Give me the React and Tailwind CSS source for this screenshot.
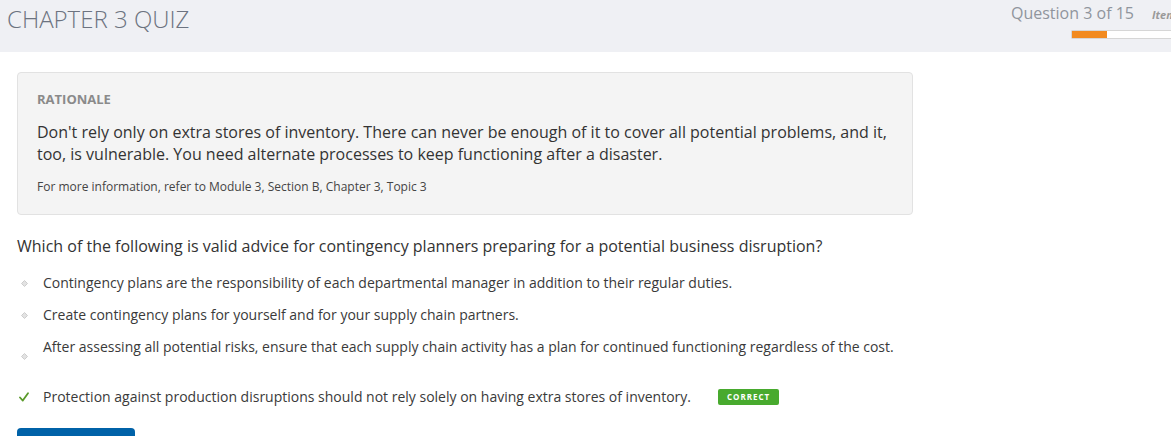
import React from 'react';

const options = [
    { text: 'Contingency plans are the responsibility of each departmental manager in addition to their regular duties.' },
    { text: 'Create contingency plans for yourself and for your supply chain partners.' },
    { text: 'After assessing all potential risks, ensure that each supply chain activity has a plan for continued functioning regardless of the cost.', tall: true },
    { text: 'Protection against production disruptions should not rely solely on having extra stores of inventory.', correct: true },
];

const Bullet = () => (
    <svg width="7" height="7" viewBox="0 0 7 7" className="block">
        <path d="M3.5 0.5 L6.5 3.5 L3.5 6.5 L0.5 3.5 Z" fill="#e2e2e2" stroke="#c4c4c4" strokeWidth="0.8" />
    </svg>
);

const Check = () => (
    <svg width="10" height="10" viewBox="0 0 10 10" className="block">
        <path d="M1 5.5 L3.8 8.6 L9 1.2" fill="none" stroke="#5a9a2a" strokeWidth="1.8" strokeLinecap="round" strokeLinejoin="round" />
    </svg>
);

export default function App() {
    return (
        <div className="w-[1171px] h-[436px] overflow-hidden bg-white" style={{ fontFamily: '"Open Sans", "Liberation Sans", sans-serif' }}>
            {/* Header */}
            <div className="h-[52px] bg-[#eff0f4] flex">
                <h1 className="pl-[7px] pt-[3px] text-[24px] leading-[32px] font-light text-[#6c7380]">CHAPTER 3 QUIZ</h1>
                <div className="ml-auto w-[240px] shrink-0 mr-[-80px] pt-[2px]">
                    <div className="flex items-baseline">
                        <span className="text-[16px] leading-[22px] text-[#90959d]">Question 3 of 15</span>
                        <span className="ml-[18px] text-[11px] italic font-bold text-[#9a9a9a]">Item 3</span>
                    </div>
                    <div className="ml-[60px] mt-[6px] h-[9px] w-[180px] bg-white border border-[#d6d6d6] rounded-[1px] overflow-hidden">
                        <div className="h-full w-[35px] bg-[#f28a1f]" />
                    </div>
                </div>
            </div>

            <div className="px-[17px]">
                {/* Rationale */}
                <div className="mt-[20px] w-[896px] bg-[#f4f4f4] border border-[#e2e2e2] rounded-[4px] pl-[19px] pr-[20px] pt-[17px] pb-[18px]">
                    <div className="text-[13px] leading-[18px] font-bold text-[#8a8a8a]">RATIONALE</div>
                    <p className="mt-[13px] text-[16px] leading-[22px] text-[#333]">
                        Don't rely only on extra stores of inventory. There can never be enough of it to cover all potential problems, and it, too, is vulnerable. You need alternate processes to keep functioning after a disaster.
                    </p>
                    <p className="mt-[13px] text-[12px] leading-[18px] text-[#444]">For more information, refer to Module 3, Section B, Chapter 3, Topic 3</p>
                </div>

                {/* Question */}
                <p className="mt-[19px] text-[16px] leading-[24px] text-[#333]">
                    Which of the following is valid advice for contingency planners preparing for a potential business disruption?
                </p>

                <ul className="mt-[15px] flex flex-col gap-[12px]">
                    {options.map((opt, i) => (
                        <li key={i} className="flex items-center">
                            <span className="w-[26px] flex justify-start pl-[2px]">
                                {opt.correct ? <Check /> : <span className="pl-[2px]"><Bullet /></span>}
                            </span>
                            <span className={`text-[14px] leading-[20px] text-[#3a3a3a] ${opt.tall ? 'pb-[18px]' : ''}`}>{opt.text}</span>
                            {opt.correct && (
                                <span className="ml-[27px] h-[16px] px-[9px] flex items-center bg-[#48aa2e] rounded-[2px] text-white text-[8px] font-bold tracking-[1px]">CORRECT</span>
                            )}
                        </li>
                    ))}
                </ul>

                <button className="mt-[21px] w-[118px] h-[30px] bg-[#0062a8] rounded-[4px]" />
            </div>
        </div>
    );
}
